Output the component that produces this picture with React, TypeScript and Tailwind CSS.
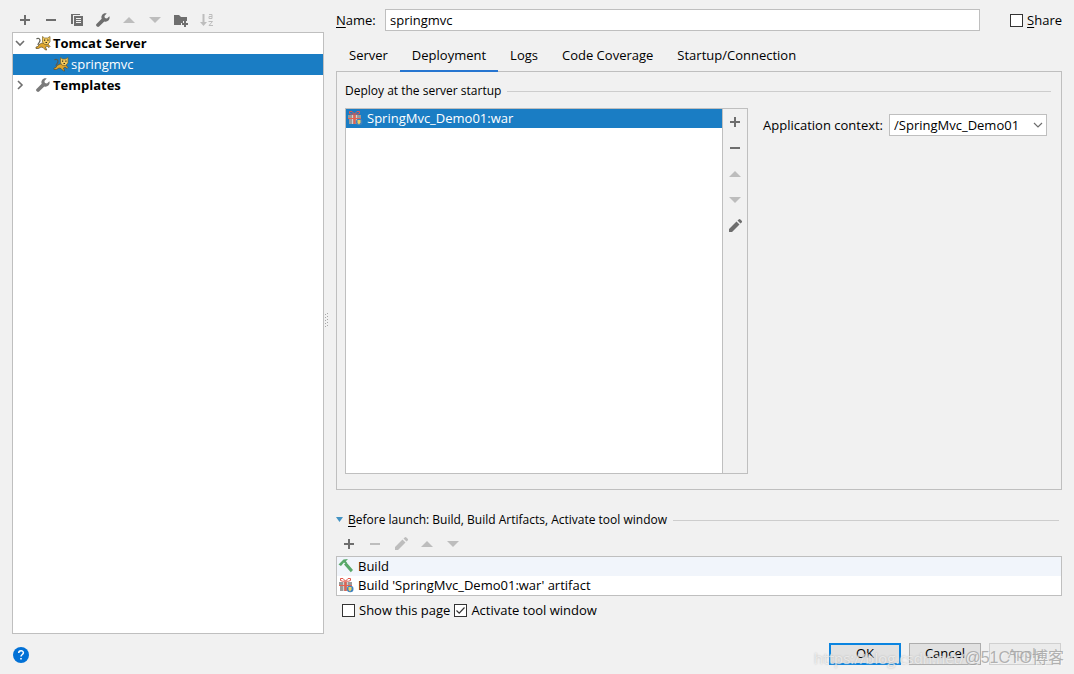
import React, { useState } from "react";

type IconProps = { className?: string };

const AddIcon = () => (
  <svg width="16" height="16" viewBox="0 0 16 16" fill="currentColor">
    <path d="M7 3h2v4h4v2H9v4H7V9H3V7h4z" />
  </svg>
);

const RemoveIcon = () => (
  <svg width="16" height="16" viewBox="0 0 16 16" fill="currentColor">
    <path d="M3 7h10v2H3z" />
  </svg>
);

const CopyIcon = () => (
  <svg width="16" height="16" viewBox="0 0 16 16" fill="currentColor">
    <path d="M2 2h9v1H4v9H2z" />
    <path fillRule="evenodd" d="M5 4h9v10H5zM7 6v1h5V6zM7 8v1h5V8zM7 10v1h5v-1z" />
  </svg>
);

const WrenchIcon = ({ className }: IconProps) => (
  <svg className={className} width="16" height="16" viewBox="0 0 16 16" fill="currentColor">
    <path d="M14.4 4.2 12 6.5 9.9 6l-.5-2.1 2.3-2.4C10 1 8.1 1.5 7.1 3c-.8 1.2-.9 2.5-.4 3.700L1.500 11.900a1.500 1.500 0 0 0 0 2.200l.5.500c.6.600 1.500.600 2.100 0l5.200-5.200c1.400.5 3 .2 4.100-.9 1.200-1.200 1.500-2.900 1-4.300z" />
  </svg>
);

const UpIcon = () => (
  <svg width="16" height="16" viewBox="0 0 16 16" fill="currentColor">
    <path d="M2 11h12L8 5z" />
  </svg>
);

const DownIcon = () => (
  <svg width="16" height="16" viewBox="0 0 16 16" fill="currentColor">
    <path d="M2 5h12l-6 6z" />
  </svg>
);

const FolderIcon = () => (
  <svg width="16" height="16" viewBox="0 0 16 16" fill="currentColor">
    <path d="M1 3h5l2 2h6v4h-4v2H8v2H1z" />
    <path d="M11 9h2v2h2v2h-2v2h-2v-2H9v-2h2z" />
  </svg>
);

const SortIcon = () => (
  <svg width="16" height="16" viewBox="0 0 16 16" fill="none" stroke="currentColor">
    <path d="M4.500 2v9" strokeWidth="2" />
    <path d="M1 10h7l-3.500 4z" fill="currentColor" stroke="none" />
    <path d="M10 2.500h3v4h-3v-2h3M9.500 9.500h4l-3.500 4h4" />
  </svg>
);

const PencilIcon = () => (
  <svg width="16" height="16" viewBox="0 0 16 16" fill="currentColor">
    <path d="m2 11 7.500-7.500 3 3L5 14H2zM10.500 2.600l1.200-1.200a1.200 1.200 0 0 1 1.700 0l1.300 1.300a1.200 1.200 0 0 1 0 1.700l-1.200 1.200z" />
  </svg>
);

const TomcatIcon = () => (
  <svg className="mr-0.5" width="16" height="16" viewBox="0 0 16 16">
    <path d="M1.500 4C3 2.500 5 3.500 5 5.500 5 7.500 3 8 3 10" fill="none" stroke="#5a5a50" strokeWidth="1.200" />
    <path d="M7 8 4 9.500l-1 2-2 .5v1.500h2.500L6 12l2 .5 2.500 2.500h1.200l-1.200-3 1.500-1 2 1.500 1-1-2.500-3z" fill="#e0a62c" stroke="#5b4d2c" strokeWidth=".7" />
    <path d="M7.500 1.500 9.500 3h3L15 1.500V7l-2.500 2.500h-3L7.500 7z" fill="#f3c95c" stroke="#7a6328" strokeWidth=".7" />
    <path d="M9 4.500h1.200v1.200H9zM12.300 4.500h1.200v1.200h-1.200zM10.500 7h1.500v.9h-1.500z" fill="#2f2b20" />
  </svg>
);

const ArtifactIcon = () => (
  <svg width="16" height="16" viewBox="0 0 16 16">
    <path d="M1 5h13v3H1zM2 9h11v5H2z" fill="#9a9a9a" />
    <path d="M6.500 5h2v9h-2zM1 8h13v1H1z" fill="#e8604f" />
    <path d="M5 5h1v3H5zM9 5h1v3H9zM5 9h1v5H5zM9 9h1v5H9z" fill="#d4d0cf" />
    <path d="M7.500 4.200 5 1.500H2.500v2l2 .7h6l2-.7v-2H10z" fill="none" stroke="#e2574c" />
    <circle cx="12.200" cy="12" r="3.300" fill="#3f83bf" />
    <path d="M10.500 10h3v2.500L12 14.500l-1.500-1.500z" fill="#f0cf63" />
  </svg>
);

const HammerIcon = () => (
  <svg width="16" height="16" viewBox="0 0 16 16" fill="#59a869">
    <path d="m.5 6.500 5-5L10 1 7.800 3.200l1.400 1.500-1.400 1.400L6 4.500 3 8zM6 6.500l2.500-2 6.500 7.500-2.200 2.200z" />
  </svg>
);

const icons = {
  add: AddIcon,
  remove: RemoveIcon,
  copy: CopyIcon,
  wrench: WrenchIcon,
  up: UpIcon,
  down: DownIcon,
  folder: FolderIcon,
  sort: SortIcon,
  pencil: PencilIcon,
};

interface ToolButtonProps {
  icon: keyof typeof icons;
  label: string;
  disabled?: boolean;
}

const ToolButton: React.FC<ToolButtonProps> = ({ icon, label, disabled }) => {
  const Icon = icons[icon];
  return (
    <button
      type="button"
      aria-label={label}
      disabled={disabled}
      className="flex size-[26px] items-center justify-center text-[#6e6e6e] disabled:text-[#bdbdbd]"
    >
      <Icon />
    </button>
  );
};

interface CheckFieldProps {
  checked: boolean;
  onChange: (checked: boolean) => void;
  children: React.ReactNode;
}

const CheckField: React.FC<CheckFieldProps> = ({ checked, onChange, children }) => (
  <label className="flex items-center gap-1 whitespace-nowrap">
    <span className="relative flex">
      <input
        type="checkbox"
        checked={checked}
        onChange={(e) => onChange(e.target.checked)}
        className="size-[13px] appearance-none border border-[#333] bg-white"
      />
      {checked && (
        <svg className="pointer-events-none absolute inset-0" width="13" height="13" viewBox="0 0 13 13" fill="none" stroke="#333" strokeWidth="1.2">
          <path d="m2.500 6.500 2.700 2.700L10.500 3.500" />
        </svg>
      )}
    </span>
    <span>{children}</span>
  </label>
);

const tabs = ["Server", "Deployment", "Logs", "Code Coverage", "Startup/Connection"];

export default function App() {
  const [name, setName] = useState("springmvc");
  const [activeTab, setActiveTab] = useState("Deployment");
  const [share, setShare] = useState(false);
  const [showPage, setShowPage] = useState(false);
  const [activate, setActivate] = useState(true);

  const treeRow = "flex h-[21px] items-center pb-0.5";
  const footerButton = "flex h-[22px] w-[72px] items-center justify-center pb-0.5";

  return (
    <div className="relative flex min-h-screen flex-col bg-[#f1f1f1] font-['Open_Sans','Noto_Sans',sans-serif] text-[13px] leading-5 text-black">
      <main className="flex flex-1">
        <aside className="ml-3 flex w-[312px] shrink-0 flex-col">
          <div className="flex h-8 items-end">
            <div className="flex h-[25px] items-center">
              <ToolButton icon="add" label="Add" />
              <ToolButton icon="remove" label="Remove" />
              <ToolButton icon="copy" label="Copy" />
              <ToolButton icon="wrench" label="Edit templates" />
              <ToolButton icon="up" label="Move up" disabled />
              <ToolButton icon="down" label="Move down" disabled />
              <ToolButton icon="folder" label="New folder" />
              <ToolButton icon="sort" label="Sort" disabled />
            </div>
          </div>
          <ul className="flex-1 border border-[#bfbfbf] bg-white">
            <li className={`${treeRow} font-bold`}>
              <svg className="mr-2.5 ml-0.5" width="10" height="10" viewBox="0 0 10 10" fill="none" stroke="#6e6e6e" strokeWidth="1.6">
                <path d="m1 3 4 4 4-4" />
              </svg>
              <TomcatIcon />
              <span>Tomcat Server</span>
            </li>
            <li className={`${treeRow} bg-[#1a7dc4] pl-10 text-white`}>
              <TomcatIcon />
              <span>springmvc</span>
            </li>
            <li className={`${treeRow} font-bold`}>
              <svg className="mr-2.5 ml-0.5" width="10" height="10" viewBox="0 0 10 10" fill="none" stroke="#6e6e6e" strokeWidth="1.6">
                <path d="m3 1 4 4-4 4" />
              </svg>
              <WrenchIcon className="mr-0.5 text-[#7a7a7a]" />
              <span>Templates</span>
            </li>
          </ul>
        </aside>

        <div className="flex w-3 items-center pt-1.5">
          <svg width="6" height="16" viewBox="0 0 6 16" fill="#a8a8a8">
            <path d="M1 2h1v1H1zM3 1h1v1H3zM1 5h1v1H1zM3 4h1v1H3zM1 8h1v1H1zM3 7h1v1H3zM1 11h1v1H1zM3 10h1v1H3zM1 14h1v1H1zM3 13h1v1H3z" />
          </svg>
        </div>

        <section className="mr-3 flex min-w-0 flex-1 flex-col">
          <div className="mt-[9px] flex h-[22px] items-center">
            <label htmlFor="name" className="w-[49px]">
              <u className="underline-offset-2">N</u>ame:
            </label>
            <input
              id="name"
              value={name}
              onChange={(e) => setName(e.target.value)}
              className="mr-[30px] h-[22px] min-w-0 flex-1 border border-[#bfbfbf] bg-white px-1 outline-none"
            />
            <CheckField checked={share} onChange={setShare}>
              <u className="underline-offset-2">S</u>hare
            </CheckField>
          </div>

          <div role="tablist" className="relative mt-2 ml-px flex h-[33px]">
            {tabs.map((tab) => (
              <button
                key={tab}
                type="button"
                role="tab"
                aria-selected={activeTab === tab}
                onClick={() => setActiveTab(tab)}
                className="border-b-2 border-transparent px-3 pt-px whitespace-nowrap aria-selected:border-[#2675d0]"
              >
                {tab}
              </button>
            ))}
          </div>

          <div className="-mt-px flex flex-1 flex-col border border-[#bfbfbf] pt-[9px] pr-2.5 pb-[15px] pl-2">
            <div className="flex items-center gap-1.5 text-[12px]">
              <h2>Deploy at the server startup</h2>
              <hr className="flex-1 border-[#cdcdcd]" />
            </div>
            <div className="mt-[7px] flex flex-1">
              <div className="flex w-[403px] border border-[#bfbfbf]">
                <ul className="flex-1 border-r border-[#bfbfbf] bg-white">
                  <li className="flex h-[19px] items-center gap-1 bg-[#1a7dc4] pb-0.5 pl-px text-white">
                    <ArtifactIcon />
                    SpringMvc_Demo01:war
                  </li>
                </ul>
                <div className="flex w-6 flex-col items-center">
                  <ToolButton icon="add" label="Add artifact" />
                  <ToolButton icon="remove" label="Remove artifact" />
                  <ToolButton icon="up" label="Move artifact up" disabled />
                  <ToolButton icon="down" label="Move artifact down" disabled />
                  <ToolButton icon="pencil" label="Edit artifact" />
                </div>
              </div>
              <div className="mt-1.5 mr-1 ml-[15px] flex h-[22px] flex-1 items-center gap-1.5">
                <label htmlFor="context" className="whitespace-nowrap">Application context:</label>
                <div className="relative min-w-0 flex-1">
                  <select
                    id="context"
                    className="block h-[22px] w-full appearance-none border border-[#bfbfbf] bg-white pl-1 outline-none"
                  >
                    <option>/SpringMvc_Demo01</option>
                  </select>
                  <svg className="pointer-events-none absolute top-1.5 right-1" width="10" height="10" viewBox="0 0 10 10" fill="none" stroke="#6e6e6e" strokeWidth="1.2">
                    <path d="m1 3 4 4 4-4" />
                  </svg>
                </div>
              </div>
            </div>
          </div>

          <div className="mt-5 mr-[3px] flex items-center text-[12px]">
            <svg className="mr-1" width="8" height="6" viewBox="0 0 8 6" fill="#4393c3">
              <path d="M0 0h7L3.500 5z" />
            </svg>
            <h2 className="mr-1.5">
              <u className="underline-offset-2">B</u>efore launch: Build, Build Artifacts, Activate tool window
            </h2>
            <hr className="flex-1 border-[#cdcdcd]" />
          </div>
          <div className="flex h-[26px] items-center pt-0.5">
            <ToolButton icon="add" label="Add task" />
            <ToolButton icon="remove" label="Remove task" disabled />
            <ToolButton icon="pencil" label="Edit task" disabled />
            <ToolButton icon="up" label="Move task up" disabled />
            <ToolButton icon="down" label="Move task down" disabled />
          </div>
          <ul className="border border-[#bfbfbf] bg-white">
            <li className="flex h-[19px] items-center gap-1 bg-[#f1f5fb] pb-0.5 pl-px">
              <HammerIcon />
              Build
            </li>
            <li className="flex h-[19px] items-center gap-1 pb-0.5 pl-px">
              <ArtifactIcon />
              Build 'SpringMvc_Demo01:war' artifact
            </li>
          </ul>
          <div className="mt-1 mb-3.5 ml-1.5 flex gap-1">
            <CheckField checked={showPage} onChange={setShowPage}>Show this page</CheckField>
            <CheckField checked={activate} onChange={setActivate}>Activate tool window</CheckField>
          </div>
        </section>
      </main>

      <footer className="flex h-10 items-center px-[13px]">
        <button type="button" aria-label="Help" className="mt-0.5 mr-auto">
          <svg width="16" height="16" viewBox="0 0 16 16" fill="none">
            <circle cx="8" cy="8" r="8" fill="#0271d6" />
            <path d="M5.700 6c0-3 4.700-3 4.700-.2C10.400 7.500 8 7.500 8 9.500" stroke="#fff" strokeWidth="1.500" />
            <path d="M7.200 11h1.600v1.600H7.200z" fill="#fff" />
          </svg>
        </button>
        <div className="flex gap-2">
          <button type="button" className={`${footerButton} border-2 border-[#0a84e0] bg-[#e1e1e1]`}>OK</button>
          <button type="button" className={`${footerButton} border border-[#adadad] bg-[#e1e1e1]`}>Cancel</button>
          <button type="button" disabled className={`${footerButton} border border-[#d0d0d0] bg-[#ebebeb] text-[#b0b0b0]`}>Apply</button>
        </div>
      </footer>

      {/* watermark lies over the dialog buttons */}
      <div className="pointer-events-none absolute right-2.5 bottom-1.5 flex items-center whitespace-nowrap">
        <span className="text-[15px] text-white/60 [text-shadow:0_0_2px_#b0b0b0]">https://blog.csdn.net/</span>
        <span className="font-['Liberation_Sans','Noto_Sans_CJK_SC',sans-serif] text-[16px] text-[#a0a0a0]/80 [text-shadow:1px_1px_0_#ffffff80]">@51CTO博客</span>
      </div>
    </div>
  );
}
